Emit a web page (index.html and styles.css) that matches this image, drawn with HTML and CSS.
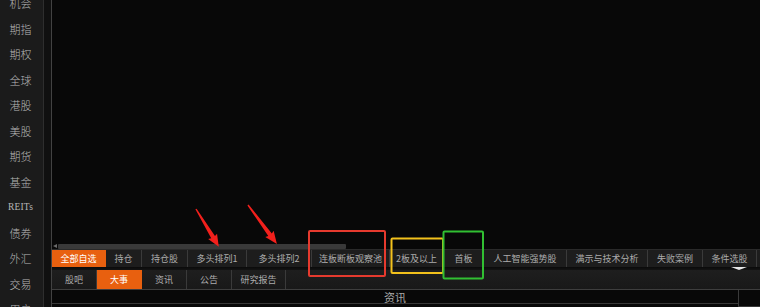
FILE: index.html
```html
<!DOCTYPE html>
<html lang="zh-CN">
<head>
<meta charset="utf-8">
<title>行情</title>
<link rel="stylesheet" href="styles.css">
</head>
<body>
<div class="app">
  <nav class="sidebar">
    <ul class="side-list">
      <li>机会</li>
      <li>期指</li>
      <li>期权</li>
      <li>全球</li>
      <li>港股</li>
      <li>美股</li>
      <li>期货</li>
      <li>基金</li>
      <li class="latin">REITs</li>
      <li>债券</li>
      <li>外汇</li>
      <li>交易</li>
      <li>用户</li>
    </ul>
  </nav>
  <div class="gutter"></div>
  <main class="main">
    <section class="chart"></section>
    <div class="scrollbar">
      <span class="scroll-arrow"></span>
      <span class="scroll-thumb"></span>
    </div>
    <div class="tabs tabs-top">
      <span class="tab active">全部自选</span>
      <span class="tab">持仓</span>
      <span class="tab">持仓股</span>
      <span class="tab">多头排列1</span>
      <span class="tab">多头排列2</span>
      <span class="tab">连板断板观察池</span>
      <span class="tab">2板及以上</span>
      <span class="tab">首板</span>
      <span class="tab">人工智能强势股</span>
      <span class="tab">满示与技术分析</span>
      <span class="tab">失败案例</span>
      <span class="tab">条件选股</span>
    </div>
    <div class="splitter"><span class="handle"></span></div>
    <div class="tabs tabs-sub">
      <span class="tab">股吧</span>
      <span class="tab active">大事</span>
      <span class="tab">资讯</span>
      <span class="tab">公告</span>
      <span class="tab">研究报告</span>
    </div>
    <div class="panel-head">
      <span class="panel-title">资讯</span>
      <span class="panel-side"></span>
    </div>
  </main>
</div>
<svg class="marks" width="760" height="307" viewBox="0 0 760 307">
  <g fill="#f2201c">
    <polygon transform="translate(196,209) rotate(58.8)" points="0,-0.7 33,-2.2 32,-5.2 44,0 32,5.2 33,2.2 0,0.7"/>
    <polygon transform="translate(248,205) rotate(53.4)" points="0,-0.7 37,-2.2 36,-5.2 48.5,0 36,5.2 37,2.2 0,0.7"/>
  </g>
  <rect x="309" y="231" width="76" height="45" fill="none" stroke="#e63a2e" stroke-width="2" rx="1"/>
  <rect x="391.5" y="238.5" width="51.5" height="34.5" fill="none" stroke="#f3c21c" stroke-width="2" rx="1"/>
  <rect x="443.5" y="231.5" width="39.5" height="47" fill="none" stroke="#31bf32" stroke-width="2" rx="1"/>
</svg>
</body>
</html>
```
FILE: styles.css
```css
* { box-sizing: border-box; margin: 0; padding: 0; }

html, body {
  width: 760px;
  height: 307px;
  overflow: hidden;
  background: #080808;
  font-family: "Noto Sans CJK SC", "Noto Sans", sans-serif;
}

.app {
  display: flex;
  width: 760px;
  height: 307px;
}

.sidebar {
  width: 44px;
  flex: none;
  background: #1b1b1b;
  border-right: 1px solid #2e2e2e;
  overflow: hidden;
}

.side-list {
  list-style: none;
  margin-top: -9.75px;
}

.side-list li {
  height: 25.5px;
  display: flex;
  align-items: center;
  justify-content: center;
  color: #b6b6b6;
  font-size: 11px;
  font-weight: 300;
  padding-right: 2px;
}

.side-list li.latin {
  font-family: "Liberation Serif", serif;
  font-size: 9.5px;
  font-weight: 400;
  letter-spacing: 0.2px;
}

.gutter {
  width: 8px;
  flex: none;
  background: #101010;
  border-right: 1px solid #424242;
}

.main {
  flex: 1;
  display: flex;
  flex-direction: column;
  min-width: 0;
  position: relative;
}

.chart {
  flex: 1;
  background: #080808;
}

.scrollbar {
  height: 7px;
  display: flex;
  align-items: center;
  padding-top: 1px;
  padding-left: 1px;
}

.scroll-arrow {
  width: 0;
  height: 0;
  border-top: 2.5px solid transparent;
  border-bottom: 2.5px solid transparent;
  border-right: 4px solid #6a6a6a;
  margin-right: 1px;
}

.scroll-thumb {
  width: 288px;
  height: 5px;
  background: #393939;
  border-radius: 1px;
}

.tabs {
  display: flex;
  align-items: stretch;
}

.tab {
  display: flex;
  align-items: center;
  justify-content: center;
  flex: none;
  font-size: 9px;
  color: #acacac;
  border-right: 1px solid #3a3a3a;
  white-space: nowrap;
}

.tab.active {
  background: #e8600f;
  color: #ffffff;
  border-right-color: #e8600f;
}

.tabs-top {
  height: 18px;
  background: #1d1d1d;
  border-top: 1px solid #2a2a2a;
}

.tabs-top .tab:nth-child(1) { width: 54px; }
.tabs-top .tab:nth-child(2) { width: 36px; }
.tabs-top .tab:nth-child(3) { width: 46px; }
.tabs-top .tab:nth-child(4) { width: 59px; }
.tabs-top .tab:nth-child(5) { width: 65px; }
.tabs-top .tab:nth-child(6) { width: 78px; }
.tabs-top .tab:nth-child(7) { width: 54px; }
.tabs-top .tab:nth-child(8) { width: 40px; }
.tabs-top .tab:nth-child(9) { width: 83px; }
.tabs-top .tab:nth-child(10) { width: 81px; }
.tabs-top .tab:nth-child(11) { width: 55px; }
.tabs-top .tab:nth-child(12) { width: 54px; }

.splitter {
  height: 3px;
  background: linear-gradient(#0a0a0a, #141414);
  display: flex;
  justify-content: flex-end;
  padding-right: 13px;
}

.handle {
  width: 0;
  height: 0;
  border-left: 8px solid transparent;
  border-right: 8px solid transparent;
  border-top: 3px solid #e6e6e6;
}

.tabs-sub {
  height: 19px;
  background: linear-gradient(#1e1e1e, #191919);
}

.tabs-sub .tab { width: 45px; }
.tabs-sub .tab:nth-child(5) { width: 54px; }

.panel-head {
  display: flex;
  height: 18px;
  border-top: 1px solid #3e3e3e;
  align-items: flex-start;
}

.panel-title {
  flex: 1;
  height: 14px;
  display: flex;
  align-items: center;
  justify-content: center;
  font-size: 11px;
  color: #a6a6a6;
  border-bottom: 1px solid #383838;
}

.panel-side {
  width: 22px;
  height: 17px;
  border-left: 1px solid #3a3a3a;
  border-bottom: 1px solid #383838;
}

.marks {
  position: absolute;
  left: 0;
  top: 0;
  pointer-events: none;
}
```
